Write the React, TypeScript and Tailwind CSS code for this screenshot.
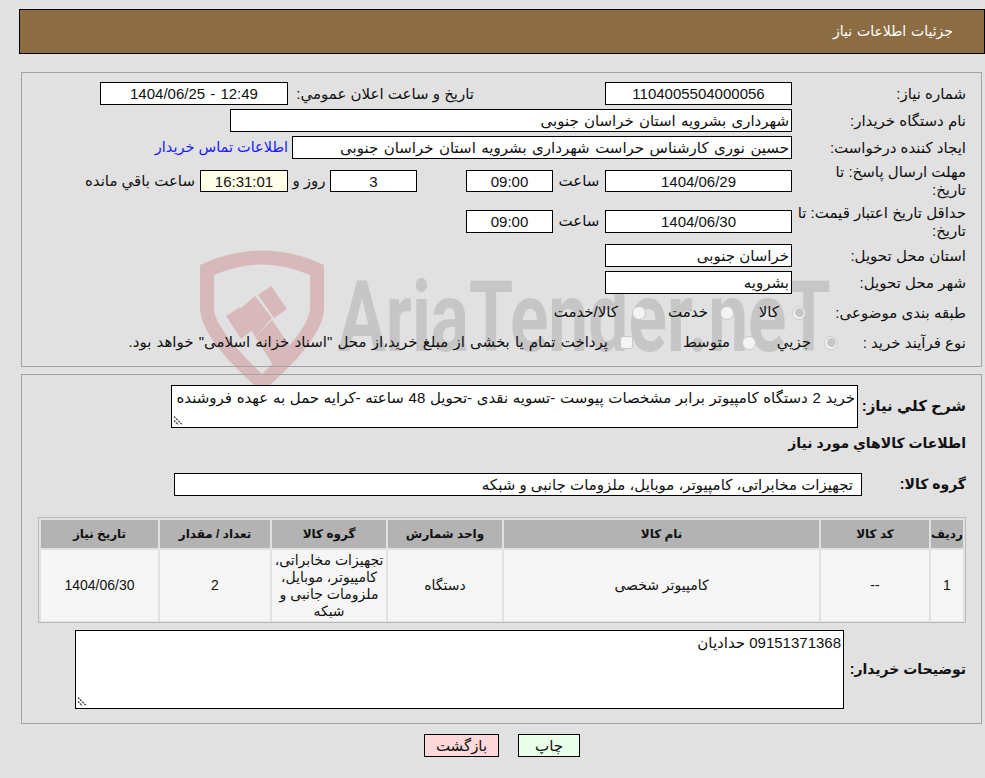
import React from 'react'

const box = 'bg-white border border-black flex items-center h-[23px] text-[15px] leading-none shrink-0'
const txt = 'text-[15px] leading-[18px]'

const Label = ({ children, className = '' }: { children: React.ReactNode; className?: string }) => (
  <div className={`${txt} shrink-0 ${className}`}>{children}</div>
)

const Radio = ({ on = false }: { on?: boolean }) => (
  <span className="w-[14px] h-[14px] rounded-full border border-[#c8c8c8] bg-[#f4f4f4] flex items-center justify-center shrink-0">
    {on && <span className="w-[9px] h-[9px] rounded-full bg-[#c6c6c6]" />}
  </span>
)

// گوشه تغییر اندازه textarea
const Resize = () => (
  <svg className="absolute left-[1px] bottom-[1px]" width="11" height="11" viewBox="0 0 11 11">
    <path d="M1 1.5l8.5 8.5M1 5.5l4.5 4.5" stroke="#555" strokeWidth="1.5" strokeDasharray="2 1" fill="none" />
  </svg>
)

const Watermark = () => (
  <div dir="ltr" className="absolute left-0 top-0 w-[985px] h-[400px] pointer-events-none">
    <svg className="absolute left-[198px] top-[248px]" width="130" height="142" viewBox="198 248 130 142">
      <path
        fillRule="evenodd"
        fill="#d8b9bb"
        d="M200 265 Q262 236 324 265 L324 310 Q322 340 262 392 Q202 340 200 310 Z M214 275 Q262 254 310 275 L310 310 Q308 330 262 374 Q216 330 214 310 Z"
      />
      <g fill="#d8b9bb">
        <path d="M226 316 L240 307 L254 329 L241 339 Z" />
        <path d="M241 308 L255 296 L272 318 L255 337 Z" />
        <path d="M258 295 L271 286 L287 309 L274 318 Z" />
        <path d="M255 337 L272 320 L298 358 L279 374 Z" />
      </g>
    </svg>
    <div className="absolute left-[338px] top-[258px] text-[98px] leading-[120px] font-bold text-[#c6c6c6] origin-left scale-x-[0.727] whitespace-nowrap font-['Roboto',sans-serif]">
      AriaTender.neT
    </div>
  </div>
)

export default function App() {
  return (
    <div dir="rtl" className="relative w-[985px] h-[778px] overflow-hidden bg-[#e1e1e1] font-['Liberation_Sans','DejaVu_Sans',sans-serif] text-[#111]">
      <Watermark />

      <div className="relative flex flex-col pl-[19px] pt-[9px]">
        <div className="h-[45px] bg-[#8c6c42] border border-black flex items-center pr-[31px] text-white text-[14px] [word-spacing:1px]">
          جزئیات اطلاعات نیاز
        </div>

        <div className="mt-[18px] ml-[2px] mr-[3px] h-[295px] border border-[#a3a3a3] pt-[9px] pr-[15px]">
          <div className="flex items-center h-[23px]">
            <Label className="w-[174px]">شماره نیاز:</Label>
            <div className={`${box} w-[187px] justify-center`}>1104005504000056</div>
            <Label className="w-[186px] mr-[131px] whitespace-nowrap">تاریخ و ساعت اعلان عمومي:</Label>
            <div dir="ltr" className={`${box} w-[188px] justify-center [word-spacing:1px]`}>1404/06/25 - 12:49</div>
          </div>

          <div className="flex items-center h-[23px] mt-[4px]">
            <Label className="w-[174px]">نام دستگاه خریدار:</Label>
            <div className={`${box} w-[562px] pr-[2px] [word-spacing:1px]`}>شهرداری بشرویه استان خراسان جنوبی</div>
          </div>

          <div className="flex items-center h-[23px] mt-[4px]">
            <Label className="w-[174px]">ایجاد کننده درخواست:</Label>
            <div className={`${box} w-[500px] pr-[2px] whitespace-nowrap [word-spacing:1.3px]`}>حسین نوری کارشناس حراست شهرداری بشرویه استان خراسان جنوبی</div>
            <span className="text-[14.5px] text-[#1a1aff] mr-[4px] whitespace-nowrap">اطلاعات تماس خریدار</span>
          </div>

          <div className="flex items-center h-[36px] mt-[4px]">
            <Label className="w-[174px]">مهلت ارسال پاسخ: تا<br />تاریخ:</Label>
            <div className={`${box} !h-[22px] w-[187px] justify-center`}>1404/06/29</div>
            <span className="text-[15px] w-[52px] text-center">ساعت</span>
            <div className={`${box} !h-[22px] w-[87px] justify-center`}>09:00</div>
            <div className={`${box} !h-[22px] w-[87px] justify-center mr-[49px]`}>3</div>
            <span className="text-[15px] w-[42px] text-center whitespace-nowrap">روز و</span>
            <div className={`${box} !h-[22px] w-[88px] justify-center !bg-[#ffffe8]`}>16:31:01</div>
            <span className="text-[15px] mr-[5px] whitespace-nowrap">ساعت باقي مانده</span>
          </div>

          <div className="flex items-center h-[37px] mt-[4px]">
            <Label className="w-[174px]">حداقل تاریخ اعتبار قیمت: تا<br />تاریخ:</Label>
            <div className={`${box} w-[187px] justify-center`}>1404/06/30</div>
            <span className="text-[15px] w-[52px] text-center">ساعت</span>
            <div className={`${box} w-[87px] justify-center`}>09:00</div>
          </div>

          <div className="flex items-center h-[23px] mt-[4px]">
            <Label className="w-[174px]">استان محل تحویل:</Label>
            <div className={`${box} w-[187px] pr-[2px]`}>خراسان جنوبی</div>
          </div>

          <div className="flex items-center h-[23px] mt-[4px]">
            <Label className="w-[174px]">شهر محل تحویل:</Label>
            <div className={`${box} w-[187px] pr-[2px]`}>بشرویه</div>
          </div>

          <div className="flex items-center h-[23px] mt-[7px]">
            <Label className="w-[160px]">طبقه بندی موضوعی:</Label>
            <Radio on />
            <span className="text-[15px] mr-[13px] w-[45px]">کالا</span>
            <Radio />
            <span className="text-[15px] mr-[12px] w-[62px] whitespace-nowrap">خدمت</span>
            <Radio />
            <span className="text-[15px] mr-[14px] whitespace-nowrap">کالا/خدمت</span>
          </div>

          <div className="flex items-center h-[23px] mt-[7px]">
            <Label className="w-[128px]">نوع فرآیند خرید :</Label>
            <Radio on />
            <span className="text-[15px] mr-[13px] w-[55px]">جزیي</span>
            <Radio />
            <span className="text-[15px] mr-[12px] w-[97px]">متوسط</span>
            <span className="w-[13px] h-[13px] rounded-[3px] border border-[#c8c8c8] bg-[#f4f4f4] shrink-0" />
            <span className="text-[15px] mr-[12px] whitespace-nowrap [word-spacing:1px]">پرداخت تمام یا بخشی از مبلغ خرید،از محل "اسناد خزانه اسلامی" خواهد بود.</span>
          </div>
        </div>

        <div className="mt-[7px] ml-[2px] mr-[3px] h-[350px] border border-[#a3a3a3] pt-[10px] pr-[15px] pl-[16px]">
          <div className="flex items-center">
            <div className="w-[108px] shrink-0 text-[15px] font-bold whitespace-nowrap">شرح كلي نیاز:</div>
            <div className="relative bg-white border border-black w-[687px] h-[43px] text-[15px] leading-[18px] px-[2px] pt-[3px] pb-[20px] whitespace-nowrap overflow-hidden self-start [word-spacing:0.5px]">
              خرید 2 دستگاه کامپیوتر برابر مشخصات پیوست -تسویه نقدی -تحویل 48 ساعته -کرایه حمل به عهده فروشنده
              <Resize />
            </div>
          </div>

          <div className="text-[14px] font-bold mt-[2px] h-[26px] leading-[26px]">اطلاعات كالاهاي مورد نیاز</div>

          <div className="flex items-center mt-[17px]">
            <div className="w-[104px] shrink-0 text-[14px] font-bold whitespace-nowrap">گروه کالا:</div>
            <div className="bg-white border border-black w-[688px] h-[23px] flex items-center pr-[8px] text-[15px] leading-none">
              تجهیزات مخابراتی، کامپیوتر، موبایل، ملزومات جانبی و شبکه
            </div>
          </div>

          <div className="mt-[21px] border border-[#bbb] p-[2px] h-[106px] grid grid-cols-[32px_108px_315px_114px_114px_110px_117px] gap-[2px] grid-rows-[28px_71px] text-[14px] text-center">
            {['ردیف', 'کد کالا', 'نام کالا', 'واحد شمارش', 'گروه کالا', 'تعداد / مقدار', 'تاریخ نیاز'].map((h) => (
              <div key={h} className="bg-[#b3b3b3] font-bold text-[12px] flex items-center justify-center whitespace-nowrap">{h}</div>
            ))}
            <div className="bg-[#f6f6f6] flex items-center justify-center">1</div>
            <div className="bg-[#f6f6f6] flex items-center justify-center">--</div>
            <div className="bg-[#f6f6f6] flex items-center justify-center">کامپیوتر شخصی</div>
            <div className="bg-[#f6f6f6] flex items-center justify-center">دستگاه</div>
            <div className="bg-[#f6f6f6] flex items-center justify-center leading-[17px] px-[2px]">تجهیزات مخابراتی، کامپیوتر، موبایل، ملزومات جانبی و شبکه</div>
            <div className="bg-[#f6f6f6] flex items-center justify-center">2</div>
            <div className="bg-[#f6f6f6] flex items-center justify-center">1404/06/30</div>
          </div>

          <div className="flex items-center mt-[7px]">
            <div className="w-[122px] shrink-0 text-[14px] font-bold whitespace-nowrap">توضیحات خریدار:</div>
            <div className="relative bg-white border border-black w-[769px] h-[79px] text-[15px] leading-[18px] px-[2px] pt-[3px]">
              09151371368 حدادیان
              <Resize />
            </div>
          </div>
        </div>

        <div className="flex justify-center gap-[19px] mt-[10px]">
          <button className="w-[62px] h-[23px] bg-[#e9ffe9] border border-black text-[15px] leading-none">چاپ</button>
          <button className="w-[75px] h-[23px] bg-[#ffd9d9] border border-black text-[15px] leading-none">بازگشت</button>
        </div>
      </div>
    </div>
  )
}
